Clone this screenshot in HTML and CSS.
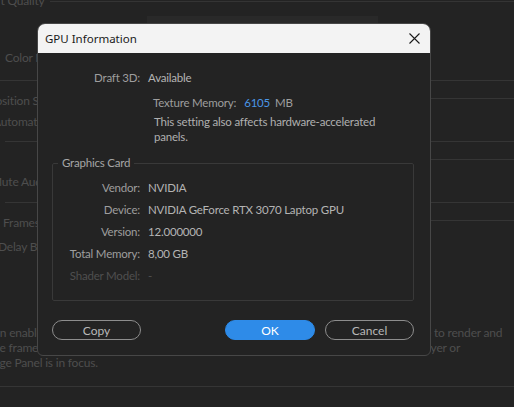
FILE: index.html
```html
<!DOCTYPE html>
<html>
<head>
<meta charset="utf-8">
<link rel="stylesheet" href="styles.css">
</head>
<body>
<div class="app">
  <div class="bg-top">
    <div class="bg-cut">Draft Quality</div>
    <div class="bg-topline"></div>
    <div class="bg-field-row"><span class="bg-field"></span></div>
    <div class="bg-label">Color Management</div>
  </div>
  <div class="bg-section">
    <div class="bg-strip"></div>
    <div class="bg-label l-comp">Composition Settings</div>
    <div class="bg-label l-auto">Automation</div>
  </div>
  <div class="bg-section inset">
    <div class="bg-strip"></div>
    <div class="bg-label l-mute">Mute Audio</div>
  </div>
  <div class="bg-section inset last">
    <div class="bg-strip"></div>
    <div class="bg-label l-frames">Frames</div>
    <div class="bg-label l-delay">Delay Before</div>
  </div>
  <div class="bg-para">
    <div class="bg-line"><span class="p1">When enabled</span><span class="bg-right">e to render and</span></div>
    <div class="bg-line"><span class="p2">the frames</span><span class="bg-right">ayer or</span></div>
    <div class="bg-line"><span class="p3">Image Panel is in focus.</span></div>
  </div>
  <div class="bg-bottomline"></div>

  <div class="dialog">
    <div class="titlebar">
      <span class="title">GPU Information</span>
      <svg class="close" width="11" height="11" viewBox="0 0 11 11"><path d="M0.5 0.5L10.5 10.5M10.5 0.5L0.5 10.5" stroke="#1b1b1b" stroke-width="1.1" fill="none"/></svg>
    </div>
    <div class="body">
      <div class="grid first">
        <span class="lbl">Draft 3D:</span><span class="val">Available</span>
      </div>
      <div class="tex">
        <span class="lbl">Texture Memory:</span><span class="blue">6105</span><span class="val mb">MB</span>
      </div>
      <p class="note">This setting also affects hardware-accelerated<br>panels.</p>
      <fieldset class="group">
        <legend>Graphics Card</legend>
        <div class="grid">
          <span class="lbl">Vendor:</span><span class="val">NVIDIA</span>
          <span class="lbl">Device:</span><span class="val">NVIDIA GeForce RTX 3070 Laptop GPU</span>
          <span class="lbl">Version:</span><span class="val">12.000000</span>
          <span class="lbl">Total Memory:</span><span class="val">8,00 GB</span>
          <span class="lbl dim">Shader Model:</span><span class="val dim">-</span>
        </div>
      </fieldset>
      <div class="buttons">
        <button class="btn">Copy</button>
        <div class="spacer"></div>
        <button class="btn primary">OK</button>
        <button class="btn">Cancel</button>
      </div>
    </div>
  </div>
</div>
</body>
</html>
```
FILE: styles.css
```css
* { box-sizing: border-box; }
html, body { margin: 0; padding: 0; }
body {
  width: 514px; height: 407px; overflow: hidden;
  background: #232323;
  font-family: Lato, "Liberation Sans", sans-serif;
}
.app { position: relative; width: 514px; height: 407px; overflow: hidden; color: #4e4e4e; font-size: 12px; letter-spacing: -0.2px; }

.bg-top { height: 80px; }
.bg-cut { height: 6px; line-height: 6px; margin-left: -22px; white-space: nowrap; position: relative; top: -2px; }
.bg-topline { margin-left: 50px; border-top: 1px solid #343434; margin-top: -5px; }
.bg-field-row { display: flex; height: 20px; margin-top: 14px; padding-left: 147px; }
.bg-field { width: 231px; height: 20px; background: #292929; }
.bg-label { height: 21px; line-height: 21px; white-space: nowrap; }
.bg-top .bg-label { margin-top: 11px; padding-left: 5px; }

.bg-section { border-top: 1px solid #353535; height: 61px; }
.bg-section.inset { margin-left: 5px; }
.bg-section.last { height: 60px; }
.bg-strip { margin-left: 380px; height: 18px; border-bottom: 1px solid #353535; }
.l-comp { margin-left: -35px; margin-top: -9px; }
.l-auto { margin-left: -7px; }
.l-mute { margin-left: -14px; margin-top: 11px; }
.l-frames { margin-left: -2px; margin-top: -9px; }
.l-delay { margin-left: -7px; margin-top: 3px; }

.bg-para { margin-top: 63px; }
.bg-line { display: flex; height: 15px; line-height: 15px; position: relative; white-space: nowrap; }
.p1 { margin-left: -25px; }
.p2 { margin-left: -11px; }
.p3 { margin-left: -19px; }
.bg-right { position: absolute; left: 425px; }
.bg-bottomline { border-top: 1px solid #353535; margin-top: 16px; }

.dialog {
  position: absolute; left: 37px; top: 23px; width: 394px; height: 333px;
  background: #232323;
  border: 1px solid #474747;
  border-radius: 8px 8px 6px 6px;
  overflow: hidden;
  display: flex; flex-direction: column;
  letter-spacing: -0.2px;
}
.titlebar {
  height: 30px; flex: none; background: #f3f3f3;
  display: flex; align-items: center; justify-content: space-between;
  padding: 0 11px 0 8px;
  margin: -1px -1px 0 -1px;
}
.title { font-family: "Noto Sans", "Open Sans", sans-serif; font-size: 11.5px; color: #1a1a1a; letter-spacing: 0; }
.close { display: block; }

.body { padding: 0 15px; flex: 1; display: flex; flex-direction: column; font-size: 11.5px; }
.grid { display: grid; grid-template-columns: 87px 1fr; column-gap: 8px; }
.grid > span { height: 22px; line-height: 22px; white-space: nowrap; }
.grid.first { margin-top: 14px; }
.lbl { text-align: right; color: #9e9e9e; }
.val { color: #b4b4b4; }
.dim { color: #4f4f4f; }
.tex { display: flex; gap: 8px; margin-left: 100px; margin-top: 3px; height: 22px; line-height: 22px; }
.tex .mb { margin-left: -3px; color: #9e9e9e; }
.blue { color: #4a96e6; }
.note { margin: 0 0 0 101px; line-height: 15px; color: #b0b0b0; }

.group {
  margin: 11px 0 0 -1px; padding: 6px 0 13px 0;
  border: 1px solid #393939; border-radius: 2px;
  width: 362px;
}
.group legend { padding: 0 4px; margin-left: 5px; color: #a6a6a6; line-height: 16px; }

.buttons { display: flex; gap: 10px; margin-top: 19px; margin-left: -1px; width: 362px; }
.spacer { flex: 1; }
.btn {
  width: 89px; height: 20px; border-radius: 10px;
  border: 1px solid #8d8d8d; background: transparent; color: #b8b8b8;
  font-family: Lato, "Liberation Sans", sans-serif; font-size: 12px; padding: 0;
}
.btn.primary { width: 90px; background: #2e8be8; border-color: #2e8be8; color: #ffffff; }
```
